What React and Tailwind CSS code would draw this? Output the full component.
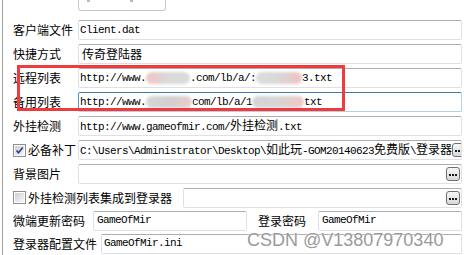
import React from 'react';

const label = "font-['Noto_Sans_CJK_SC',sans-serif] text-[12px] leading-none text-black whitespace-nowrap";
const mono = "font-['Liberation_Mono','Noto_Sans_CJK_SC',monospace] text-[11px] tracking-[-0.6px] leading-none text-black";
const cjk = "font-['Noto_Sans_CJK_SC',sans-serif] text-[12px] tracking-normal";

const Field = ({ className = '', focused = false, children }) => (
  <div
    className={`h-[20px] flex items-center rounded-[2px] border px-[1px] overflow-hidden whitespace-nowrap bg-white ${
      focused
        ? 'border-[#b5cfe7] border-t-[#3d7bad] border-l-[#5c93c9]'
        : 'border-[#dde1e6] border-t-[#abadb3]'
    } ${className}`}
  >
    {children}
  </div>
);

const BrowseButton = () => (
  <div className="ml-auto shrink-0 w-[14px] h-[14px] rounded-[3px] border border-[#707070] bg-gradient-to-b from-[#f7f7f7] to-[#d9d9d9] flex items-center justify-center">
    <svg width="8" height="4" viewBox="0 0 8 4">
      <rect x="0" y="2" width="2" height="2" fill="#1a1a1a" />
      <rect x="3" y="2" width="2" height="2" fill="#1a1a1a" />
      <rect x="6" y="2" width="2" height="2" fill="#1a1a1a" />
    </svg>
  </div>
);

const CheckBox = ({ checked }) => (
  <div className="shrink-0 w-[13px] h-[13px] border border-[#8f8f8f] bg-white p-[1px]">
    <div className="relative w-full h-full bg-gradient-to-br from-[#cfcfcf] to-[#f6f6f6]">
      {checked && (
        <svg className="absolute left-0 top-0" width="9" height="9" viewBox="0 0 9 9">
          <path d="M1.5 4.5 L3.5 6.8 L7.8 1.5" fill="none" stroke="#2b3f8c" strokeWidth="1.6" />
        </svg>
      )}
    </div>
  </div>
);

const Blob = ({ className }) => (
  <span className={`inline-block h-[12px] rounded-full blur-[1.5px] align-middle ${className}`} />
);

const Row = ({ h = 'h-[24px]', children }) => (
  <div className={`flex items-center ${h}`}>{children}</div>
);

export default function App() {
  return (
    <div className="relative w-[464px] h-[255px] bg-white overflow-hidden">
      <div className="h-full ml-[2px] border-l border-[#a0a0a0] pl-[10px] pr-[2px]">
        {/* cut-off widget at the top */}
        <div className="ml-[65px] w-[88px] h-[11px] border border-t-0 border-[#c8c8c8] rounded-b-[3px] mb-[7px] flex items-start">
          <span className="ml-[8px] w-[3px] h-[2px] bg-[#bbbbbb]" />
          <span className="ml-[40px] w-[3px] h-[2px] bg-[#bbbbbb]" />
        </div>

        <Row>
          <div className={`w-[65px] shrink-0 ${label}`}>客户端文件</div>
          <Field className="flex-1">
            <span className={mono}>Client.dat</span>
          </Field>
        </Row>

        <Row>
          <div className={`w-[65px] shrink-0 ${label}`}>快捷方式</div>
          <Field className="flex-1">
            <span className={`${label} ml-[2px]`}>传奇登陆器</span>
          </Field>
        </Row>

        <Row>
          <div className={`w-[65px] shrink-0 ${label}`}>远程列表</div>
          <Field className="flex-1">
            <span className={mono}>http://www.</span>
            <Blob className="w-[44px] bg-gradient-to-r from-[#f0c4c4] via-[#d9d9d9] to-[#dadada]" />
            <span className={mono}>.com/lb/a/:</span>
            <Blob className="w-[46px] bg-gradient-to-r from-[#dcdcdc] via-[#d8d8d8] to-[#f0c0c0]" />
            <span className={mono}>3.txt</span>
          </Field>
        </Row>

        <Row>
          <div className={`w-[65px] shrink-0 ${label}`}>备用列表</div>
          <Field className="flex-1" focused>
            <span className={mono}>http://www.</span>
            <Blob className="w-[46px] bg-gradient-to-r from-[#d6d6d6] via-[#d0d0d0] to-[#e8cccc]" />
            <span className={mono}> com/lb/a/1</span>
            <Blob className="w-[52px] bg-gradient-to-r from-[#d4d4d4] via-[#d6d6d6] to-[#f0c6c6]" />
            <span className={mono}> txt</span>
          </Field>
        </Row>

        <Row>
          <div className={`w-[65px] shrink-0 ${label}`}>外挂检测</div>
          <Field className="flex-1">
            <span className={mono}>
              http://www.gameofmir.com/<span className={cjk}>外挂检测</span>.txt
            </span>
          </Field>
        </Row>

        <Row>
          <div className="w-[65px] shrink-0 flex items-center gap-[2px]">
            <CheckBox checked />
            <span className={label}>必备补丁</span>
          </div>
          <Field className="flex-1">
            <span className={mono}>
              C:\Users\Administrator\Desktop\<span className={cjk}>如此玩</span>-GOM20140623
              <span className={cjk}>免费版</span>\<span className={cjk}>登录器</span>
            </span>
            <BrowseButton />
          </Field>
        </Row>

        <Row>
          <div className={`w-[65px] shrink-0 ${label}`}>背景图片</div>
          <Field className="flex-1">
            <BrowseButton />
          </Field>
        </Row>

        <Row h="h-[23px]">
          <div className="w-[170px] shrink-0 flex items-center gap-[2px]">
            <CheckBox />
            <span className={label}>外挂检测列表集成到登录器</span>
          </div>
          <Field className="flex-1">
            <BrowseButton />
          </Field>
        </Row>

        <Row h="h-[23px]">
          <div className={`w-[80px] shrink-0 ${label}`}>微端更新密码</div>
          <Field className="w-[154px] shrink-0">
            <span className={`${mono} ml-[2px]`}>GameOfMir</span>
          </Field>
          <div className={`ml-[11px] w-[60px] shrink-0 ${label}`}>登录密码</div>
          <Field className="flex-1">
            <span className={`${mono} ml-[2px]`}>GameOfMir</span>
          </Field>
        </Row>

        <Row h="h-[23px]">
          <div className={`w-[88px] shrink-0 ${label}`}>登录器配置文件</div>
          <Field className="flex-1">
            <span className={`${mono} ml-[1px]`}>GameOfMir.ini</span>
          </Field>
        </Row>
      </div>

      {/* annotation box */}
      <div className="absolute left-[17px] top-[65px] w-[328px] h-[46px] border-[3px] border-[#ee3b3b]" />

      {/* watermark */}
      <div className="absolute left-[247px] top-[231px] font-['Liberation_Sans',sans-serif] text-[18px] leading-none text-[#9a9a9a] whitespace-nowrap [text-shadow:0_0_1px_#ffffff,0_0_2px_#ffffff]">
        CSDN @V13807970340
      </div>
    </div>
  );
}
